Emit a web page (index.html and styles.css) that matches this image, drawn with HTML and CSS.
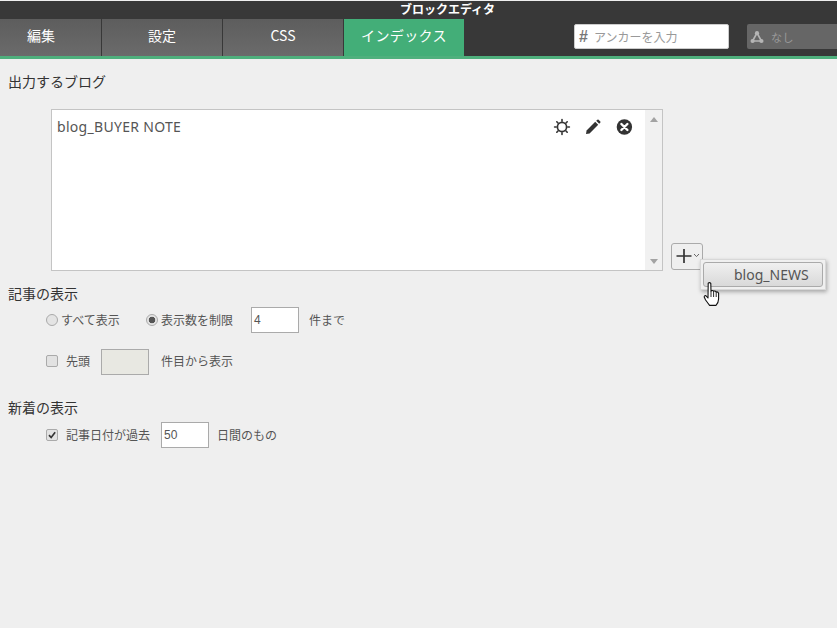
FILE: index.html
```html
<!DOCTYPE html>
<html lang="ja">
<head>
<meta charset="utf-8">
<title>ブロックエディタ</title>
<link rel="stylesheet" href="styles.css">
</head>
<body>
<header class="header">
  <div class="title">ブロックエディタ</div>
  <div class="toolbar">
    <nav class="tabs">
      <a class="tab tab-first">編集</a>
      <a class="tab">設定</a>
      <a class="tab">CSS</a>
      <a class="tab tab-active">インデックス</a>
    </nav>
    <div class="anchor"><span class="hash">#</span><span>アンカーを入力</span></div>
    <div class="group-select">
      <svg class="group-icon" width="14" height="14" viewBox="0 0 14 14"><path d="M7 3 L2.5 11 H11.5 Z" fill="none" stroke="#b5b5b5" stroke-width="1.6"/><circle cx="7" cy="3.2" r="2.1" fill="#b5b5b5"/><circle cx="2.6" cy="11" r="2.1" fill="#b5b5b5"/><circle cx="11.4" cy="11" r="2.1" fill="#b5b5b5"/></svg>
      <span>なし</span>
    </div>
  </div>
</header>
<main class="content">
  <h2 class="heading heading-first">出力するブログ</h2>
  <div class="list-row">
    <div class="list">
      <div class="list-body">
        <div class="list-item">
          <span>blog_BUYER NOTE</span>
          <span class="actions">
            <svg width="18" height="18" viewBox="0 0 18 18"><circle cx="9" cy="9" r="4.6" fill="none" stroke="#333" stroke-width="1.7"/><g stroke="#333" stroke-width="1.6" stroke-linecap="round"><path d="M9 1.6V3.2M9 14.8V16.4M1.6 9H3.2M14.8 9H16.4M3.8 3.8L4.9 4.9M13.1 13.1L14.2 14.2M14.2 3.8L13.1 4.9M4.9 13.1L3.8 14.2"/></g></svg>
            <svg width="18" height="18" viewBox="0 0 18 18"><path d="M2 16 L2.6 12.4 L11.2 3.8 L14.2 6.8 L5.6 15.4 Z" fill="#333"/><path d="M12.2 2.8 L13.4 1.7 Q14 1.2 14.6 1.7 L16.3 3.4 Q16.8 4 16.3 4.6 L15.2 5.8 Z" fill="#333"/></svg>
            <svg width="18" height="18" viewBox="0 0 18 18"><circle cx="9.4" cy="9" r="7.7" fill="#333"/><path d="M6.4 6L12.4 12M12.4 6L6.4 12" stroke="#fff" stroke-width="2.4" stroke-linecap="round"/></svg>
          </span>
        </div>
      </div>
      <div class="scrollbar">
        <span class="arrow-up"></span>
        <span class="arrow-down"></span>
      </div>
    </div>
    <div class="add-wrap">
      <button class="add" type="button">
        <svg width="16" height="16" viewBox="0 0 16 16"><path d="M8 1V15M0.5 8H15.5" stroke="#333" stroke-width="1.7"/></svg>
        <svg width="7" height="5" viewBox="0 0 7 5"><path d="M1 1L3.5 3.6L6 1" fill="none" stroke="#666" stroke-width="1"/></svg>
      </button>
      <div class="popup"><div class="popup-item">blog_NEWS</div></div>
      <svg class="hand" width="18" height="26" viewBox="0 0 18 26"><path d="M5.2 2.2 Q6.6 1 7.8 2.4 L8 10 Q9.6 9 10.6 10.2 Q12.2 9.6 13.2 11 Q15 10.6 15.6 12.2 L15.6 18 Q15.4 22 13 24.4 L6.6 24.4 Q4.8 22 2.6 19 L1.2 16 Q1.2 14.4 2.8 14.6 L5 17 Z" fill="#fff" stroke="#111" stroke-width="1.1" stroke-linejoin="round"/><path d="M8 10V16M10.6 10.2V16M13.2 11V16" stroke="#111" stroke-width="0.9" fill="none"/></svg>
    </div>
  </div>

  <h2 class="heading heading-articles">記事の表示</h2>
  <div class="row row-radio">
    <label class="opt opt-all"><span class="radio"></span>すべて表示</label>
    <label class="opt opt-limit"><span class="radio radio-on"></span>表示数を制限</label>
    <span class="field field-count">4</span>
    <span class="unit">件まで</span>
  </div>
  <div class="row row-offset">
    <span class="check"></span>
    <span class="check-label">先頭</span>
    <span class="field field-off"></span>
    <span class="unit unit-from">件目から表示</span>
  </div>

  <h2 class="heading heading-new">新着の表示</h2>
  <div class="row row-new">
    <span class="check check-on">
      <svg width="12" height="12" viewBox="0 0 12 12"><path d="M2.4 6.2L5 9L9.8 2.8" fill="none" stroke="#333" stroke-width="2"/></svg>
    </span>
    <span class="check-label">記事日付が過去</span>
    <span class="field field-days">50</span>
    <span class="unit unit-days">日間のもの</span>
  </div>
</main>
</body>
</html>
```
FILE: styles.css
```css
* { box-sizing: border-box; }
html, body { margin: 0; padding: 0; height: 100%; }
body {
  background: #efefef;
  color: #444;
  font-family: "Noto Sans CJK JP", "Noto Sans", sans-serif;
  font-size: 12px;
  overflow: hidden;
}
.header {
  margin-top: 1px;
  height: 58px;
  background: #383838;
  border-bottom: 3px solid #4fb07d;
}
.title {
  height: 18px;
  padding-left: 58px;
  line-height: 16px;
  text-align: center;
  color: #fff;
  font-size: 12px;
  font-weight: 700;
}
.toolbar { display: flex; height: 37px; }
.tabs { display: flex; width: 574px; }
.tab {
  width: 120px;
  margin-right: 1px;
  background: linear-gradient(#5d5d5d, #6b6b6b);
  color: #fff;
  font-size: 14px;
  line-height: 32px;
  text-align: center;
}
.tab-first { width: 101px; padding-right: 19px; }
.tab-active { background: #43ae78; letter-spacing: 0.4px; }
.anchor {
  display: flex;
  align-items: center;
  width: 155px;
  height: 25px;
  margin-top: 5px;
  padding-left: 4px;
  background: #fff;
  border: 1px solid #ccc;
  border-radius: 2px;
  color: #999;
  font-size: 12px;
}
.hash { color: #777; font-size: 16px; font-weight: 700; margin-right: 6px; font-family: "Liberation Sans", sans-serif; }
.group-select {
  display: flex;
  align-items: center;
  flex: 1;
  height: 25px;
  margin: 5px 0 0 18px;
  padding-left: 3px;
  background: #666;
  border-radius: 2px 0 0 2px;
  color: #999;
  font-size: 11px;
  line-height: 18px;
  letter-spacing: 0.6px;
}
.group-icon { margin-right: 7px; }
.content { display: block; }
.heading {
  margin: 0;
  color: #333;
  font-size: 14px;
  font-weight: 400;
  line-height: 20px;
  padding-left: 8px;
}
.heading-first { margin-top: 12px; }
.list-row { display: flex; margin: 18px 0 0 51px; height: 162px; }
.list {
  display: flex;
  width: 612px;
  height: 162px;
  background: #fff;
  border: 1px solid #c4c4c4;
}
.list-body { flex: 1; padding: 5px 12px 0 5px; }
.list-item {
  display: flex;
  justify-content: space-between;
  align-items: center;
  height: 24px;
  font-size: 14px;
  letter-spacing: 0.3px;
  line-height: 22px;
  color: #555;
  font-family: "Noto Sans", sans-serif;
}
.actions { display: flex; gap: 13px; }
.scrollbar {
  position: relative;
  width: 17px;
  background: #f1f1f1;
}
.arrow-up, .arrow-down {
  position: absolute;
  left: 5px;
  width: 0;
  height: 0;
  border-left: 4px solid transparent;
  border-right: 4px solid transparent;
}
.arrow-up { top: 7px; border-bottom: 5px solid #a3a3a3; }
.arrow-down { bottom: 6px; border-top: 5px solid #a3a3a3; }
.add-wrap { position: relative; margin-left: 8px; }
.add {
  display: flex;
  align-items: center;
  gap: 1px;
  width: 32px;
  height: 27px;
  margin-top: 134px;
  padding: 0 0 2px 4px;
  background: #efefef;
  border: 1px solid #aaa;
  border-radius: 3px;
}
.popup {
  position: absolute;
  left: 29px;
  top: 150px;
  width: 126px;
  height: 31px;
  padding: 2px;
  background: #f0f0f0;
  border: 1px solid #d8d8d8;
  box-shadow: 1px 2px 4px rgba(0,0,0,.3);
  z-index: 2;
}
.popup-item {
  height: 25px;
  padding-left: 30px;
  line-height: 23px;
  font-size: 14px;
  font-family: "Noto Sans", sans-serif;
  color: #555;
  background: linear-gradient(#f0f0f0, #d9d9d9);
  border: 1px solid #aaa;
  border-radius: 3px;
}
.hand { position: absolute; left: 32px; top: 172px; z-index: 3; }
.heading-articles { margin-top: 12px; }
.heading-new { margin-top: 22px; }
.row {
  display: flex;
  align-items: center;
  height: 26px;
  padding-left: 46px;
  font-size: 12px;
  line-height: 22px;
  color: #555;
}
.row-radio { margin-top: 4px; }
.row-offset { margin-top: 16px; }
.row-new { margin-top: 5px; }
.opt { display: flex; align-items: center; }
.opt-all { width: 100px; }
.opt-limit { width: 105px; }
.radio {
  width: 12px;
  height: 12px;
  margin-right: 3px;
  border: 1px solid #aaa;
  border-radius: 50%;
  background: #e4e4e4;
}
.radio-on { background: radial-gradient(circle, #555 0 3px, #e4e4e4 3.6px); }
.check {
  display: flex;
  align-items: center;
  justify-content: center;
  width: 12px;
  height: 12px;
  border: 1px solid #aaa;
  border-radius: 2px;
  background: #e2e2e2;
}
.check-label { margin: 0 11px 0 8px; }
.row-offset .check, .row-offset .check-label, .unit-from { margin-bottom: 2px; }
.field {
  width: 48px;
  height: 26px;
  padding-left: 2px;
  background: #fff;
  border: 1px solid #aaa;
  line-height: 24px;
  font-family: "Liberation Sans", sans-serif;
  font-size: 12px;
}
.field-off { background: #e8e8e2; }
.unit { margin-left: 10px; }
.unit-from { margin-left: 12px; }
.unit-days { margin-left: 8px; }
```
